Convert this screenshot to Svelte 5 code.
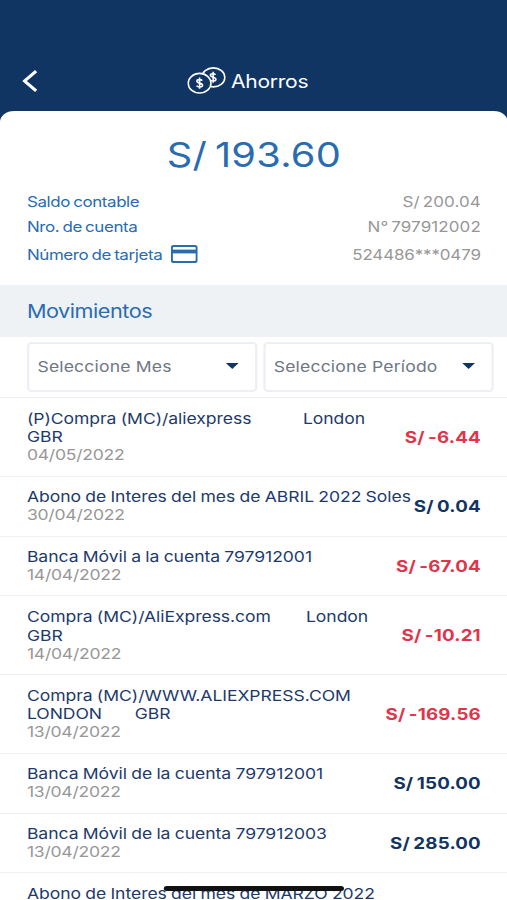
<script>
  const account = {
    balance: 'S/ 193.60',
    ledger: 'S/ 200.04',
    number: 'N° 797912002',
    card: '524486***0479'
  }

  const filters = [
    { id: 'mes', label: 'Seleccione Mes' },
    { id: 'periodo', label: 'Seleccione Período' }
  ]

  const movements = [
    { lines: [['(P)Compra (MC)/aliexpress', 'London'], ['GBR']], gap: 44, date: '04/05/2022', amount: -6.44 },
    { lines: [['Abono de Interes del mes de ABRIL 2022 Soles']], date: '30/04/2022', amount: 0.04 },
    { lines: [['Banca Móvil a la cuenta 797912001']], date: '14/04/2022', amount: -67.04 },
    { lines: [['Compra (MC)/AliExpress.com', 'London'], ['GBR']], gap: 30, date: '14/04/2022', amount: -10.21 },
    { lines: [['Compra (MC)/WWW.ALIEXPRESS.COM'], ['LONDON', 'GBR']], gap: 28, date: '13/04/2022', amount: -169.56 },
    { lines: [['Banca Móvil de la cuenta 797912001']], date: '13/04/2022', amount: 150 },
    { lines: [['Banca Móvil de la cuenta 797912003']], date: '13/04/2022', amount: 285 },
    { lines: [['Abono de Interes del mes de MARZO 2022']] }
  ]

  function formatAmount(value) {
    return `S/ ${value.toFixed(2)}`
  }
</script>

<div class="viewport">
  <div class="screen">
    <header>
      <button class="back" aria-label="Volver">
        <svg width="13" height="22" viewBox="0 0 14 22" preserveAspectRatio="none">
          <path d="M12.8 1.2 L2.2 11 L12.8 20.8" fill="none" stroke="#fff" stroke-width="3" />
        </svg>
      </button>
      <div class="title">
        <svg width="33" height="27" viewBox="0 0 39 27" preserveAspectRatio="none">
          <g fill="none" stroke="#fff" stroke-width="1.6">
            <ellipse cx="26.4" cy="10.4" rx="11.6" ry="9.5" />
            <path d="M28.6 7.8 C27.8 6.5 23.4 6.2 23.4 8.3 C23.4 10.7 29 9.7 29 12.3 C29 14.5 25.2 14.4 24 13.2 M26.2 4.8 V15.8" />
            <ellipse cx="12.5" cy="16.2" rx="11.5" ry="9.8" fill="#113563" />
            <path d="M15.2 13.7 C14.4 12.4 9.8 12 9.8 14.2 C9.8 16.6 15.5 15.6 15.5 18.2 C15.5 20.5 10.4 20.3 9.5 18.6 M12.5 10.6 V21.8" />
          </g>
        </svg>
        <h1>Ahorros</h1>
      </div>
    </header>

    <main>
      <section class="account">
        <div class="balance">{account.balance}</div>
        <div class="row">
          <span class="label">Saldo contable</span>
          <span class="value">{account.ledger}</span>
        </div>
        <div class="row">
          <span class="label">Nro. de cuenta</span>
          <span class="value">{account.number}</span>
        </div>
        <div class="row card-row">
          <span class="label">
            Número de tarjeta
            <svg width="23" height="18" viewBox="0 0 26 18" preserveAspectRatio="none">
              <rect x="1" y="1" width="24" height="16" rx="1.8" fill="none" stroke="#2a6cb0" stroke-width="2" />
              <rect x="1" y="4.6" width="24" height="3.8" fill="#2a6cb0" />
            </svg>
          </span>
          <span class="value card-number">{account.card}</span>
        </div>
      </section>

      <h2>Movimientos</h2>

      <div class="filters">
        {#each filters as filter (filter.id)}
          <button class="select">
            <span>{filter.label}</span>
            <svg width="11" height="6" viewBox="0 0 11 6">
              <path d="M0 0 H11 L5.5 6 Z" fill="#113563" />
            </svg>
          </button>
        {/each}
      </div>

      <ul>
        {#each movements as item}
          <li>
            <div class="detail">
              {#each item.lines as line}
                <div class="line" style="gap: {item.gap || 0}px">
                  {#each line as part}
                    <span>{part}</span>
                  {/each}
                </div>
              {/each}
              {#if item.date}
                <div class="date">{item.date}</div>
              {/if}
            </div>
            {#if item.amount}
              <div class="amount" class:negative={item.amount < 0}>{formatAmount(item.amount)}</div>
            {/if}
          </li>
        {/each}
      </ul>
    </main>

    <div class="home-indicator"></div>
  </div>
</div>

<style>
  :global(body) {
    margin: 0;
  }

  .viewport {
    width: 507px;
    height: 900px;
    overflow: hidden;
  }

  /* the interface is drawn with wide proportions */
  .screen {
    --stretch: 1.17;
    position: relative;
    display: flex;
    flex-direction: column;
    width: 434px;
    height: 900px;
    overflow: hidden;
    transform: scaleX(var(--stretch));
    transform-origin: 0 0;
    background: #113563;
    font-family: Inter, 'Liberation Sans', sans-serif;
    font-size: 15px;
    color: #1d3a6b;
  }

  header {
    display: grid;
    grid-template-columns: 60px 1fr 60px;
    flex: none;
    align-items: center;
    height: 58px;
    padding-top: 52px;
  }

  button {
    padding: 0;
    border: none;
    background: none;
    font: inherit;
  }

  .back {
    display: flex;
    padding-left: 18.5px;
  }

  .title {
    display: flex;
    align-items: center;
    justify-content: center;
    gap: 5px;
    margin-right: 11px;
  }

  .title svg {
    margin-bottom: 1px;
  }

  h1 {
    margin: 0;
    font-size: 18px;
    font-weight: 400;
    letter-spacing: -0.25px;
    color: #fff;
  }

  main {
    flex: 1;
    margin-top: 1px;
    overflow: hidden;
    border-radius: 12px 12px 0 0 / 11px 11px 0 0;
    background: #fff;
  }

  .account {
    height: 174px;
    padding: 0 23px;
    box-sizing: border-box;
  }

  .balance {
    padding-top: 23px;
    font-size: 34px;
    line-height: 41px;
    text-align: center;
    word-spacing: -3px;
    letter-spacing: 0.2px;
    color: #2a6cb0;
  }

  .row {
    display: flex;
    align-items: center;
    justify-content: space-between;
    height: 25px;
  }

  .row:nth-child(2) {
    margin-top: 14px;
  }

  .card-row {
    height: 30px;
  }

  .label {
    display: flex;
    align-items: center;
    gap: 7px;
    font-size: 14.5px;
    letter-spacing: -0.35px;
    word-spacing: -1px;
    color: #2a6cb0;
  }

  .value {
    font-size: 14.5px;
    letter-spacing: 0.1px;
    word-spacing: -1.7px;
    color: #979797;
  }

  .card-number {
    letter-spacing: -0.12px;
  }

  h2 {
    height: 52px;
    margin: 0;
    padding-left: 23px;
    background: #eef2f5;
    font-size: 18.5px;
    font-weight: 400;
    line-height: 53px;
    letter-spacing: -0.4px;
    color: #2a6cb0;
  }

  .filters {
    display: flex;
    gap: 5px;
    height: 61px;
    padding: 5px 12px 0 23px;
    box-sizing: border-box;
    border-bottom: 1px solid #eef0f3;
  }

  .select {
    display: flex;
    flex: 1;
    align-items: center;
    justify-content: space-between;
    height: 50px;
    padding: 0 14px 2px 7px;
    box-sizing: border-box;
    border: 2px solid #edeff5;
    border-radius: 4px;
    letter-spacing: 0.15px;
    color: #6f7684;
  }

  ul {
    margin: 0;
    padding: 0;
    list-style: none;
  }

  li {
    display: flex;
    align-items: center;
    justify-content: space-between;
    padding: 11.5px 23px 9.5px;
    border-bottom: 1px solid #eeeff1;
    line-height: 18.9px;
  }

  .line {
    display: flex;
    letter-spacing: -0.04px;
    word-spacing: -0.5px;
    white-space: nowrap;
  }

  .date {
    margin: -1px 0 1px;
    letter-spacing: -0.2px;
    color: #979797;
  }

  .amount {
    margin-top: -1px;
    font-size: 16px;
    font-weight: 700;
    letter-spacing: 0.15px;
    word-spacing: -1px;
    white-space: nowrap;
    color: #113563;
  }

  .amount.negative {
    color: #e0344a;
  }

  .home-indicator {
    position: absolute;
    top: 886px;
    left: 50%;
    width: 154px;
    height: 5px;
    margin-left: -77px;
    border-radius: 3px;
    background: #111;
  }
</style>
